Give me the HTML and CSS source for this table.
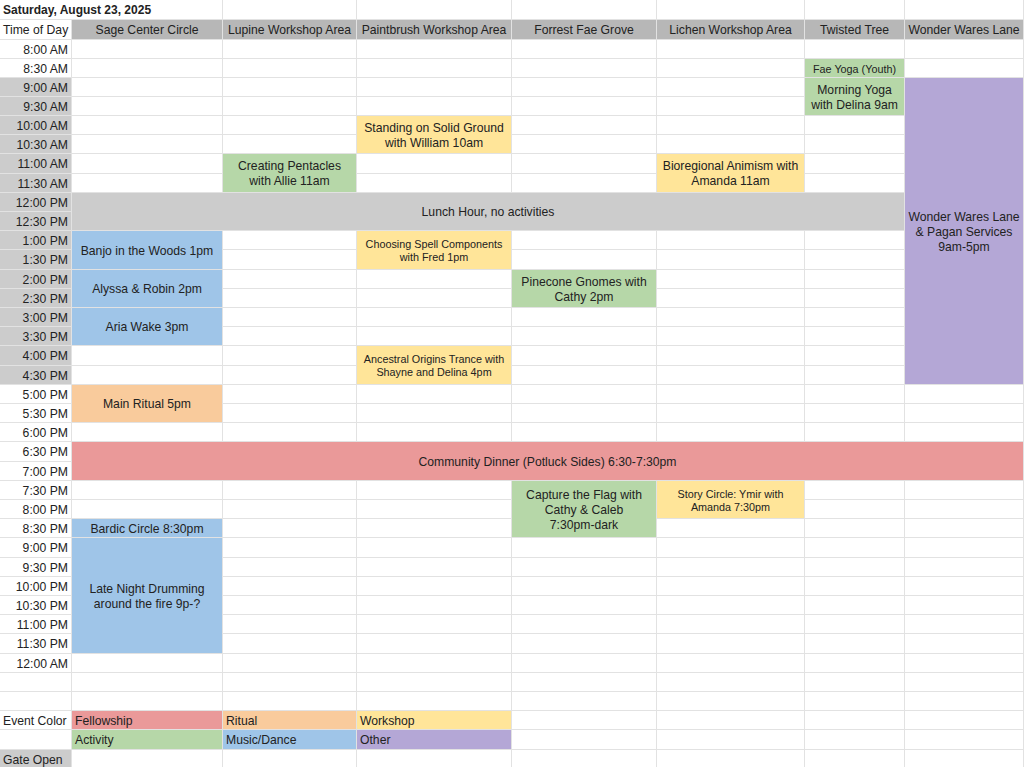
FILE: index.html
```html
<!DOCTYPE html>
<html>
<head>
<meta charset="utf-8">
<link rel="stylesheet" href="styles.css">
</head>
<body>
<table class="sheet">
<colgroup>
<col class="c-time"><col class="c-sage"><col class="c-lupine"><col class="c-paint"><col class="c-forrest"><col class="c-lichen"><col class="c-twisted"><col class="c-wonder">
</colgroup>
<tbody>
<tr class="hrow"><td class="title" colspan="2">Saturday, August 23, 2025</td><td></td><td></td><td></td><td></td><td></td><td></td></tr>
<tr class="hrow"><td class="corner">Time of Day</td><td class="head">Sage Center Circle</td><td class="head">Lupine Workshop Area</td><td class="head">Paintbrush Workshop Area</td><td class="head">Forrest Fae Grove</td><td class="head">Lichen Workshop Area</td><td class="head">Twisted Tree</td><td class="head">Wonder Wares Lane</td></tr>
<tr><td class="t">8:00 AM</td><td></td><td></td><td></td><td></td><td></td><td></td><td></td></tr>
<tr><td class="t">8:30 AM</td><td></td><td></td><td></td><td></td><td></td><td class="ev green sm">Fae Yoga (Youth)</td><td></td></tr>
<tr><td class="t open">9:00 AM</td><td></td><td></td><td></td><td></td><td></td><td class="ev green" rowspan="2">Morning Yoga<br>with Delina 9am</td><td class="ev purple" rowspan="16">Wonder Wares Lane<br>&amp; Pagan Services<br>9am-5pm</td></tr>
<tr><td class="t open">9:30 AM</td><td></td><td></td><td></td><td></td><td></td></tr>
<tr><td class="t open">10:00 AM</td><td></td><td></td><td class="ev yellow" rowspan="2">Standing on Solid Ground<br>with William 10am</td><td></td><td></td><td></td></tr>
<tr><td class="t open">10:30 AM</td><td></td><td></td><td></td><td></td><td></td></tr>
<tr><td class="t open">11:00 AM</td><td></td><td class="ev green" rowspan="2">Creating Pentacles<br>with Allie 11am</td><td></td><td></td><td class="ev yellow" rowspan="2">Bioregional Animism with<br>Amanda 11am</td><td></td></tr>
<tr><td class="t open">11:30 AM</td><td></td><td></td><td></td><td></td></tr>
<tr><td class="t open">12:00 PM</td><td class="ev lunch" colspan="6" rowspan="2">Lunch Hour, no activities</td></tr>
<tr><td class="t open">12:30 PM</td></tr>
<tr><td class="t open">1:00 PM</td><td class="ev blue" rowspan="2">Banjo in the Woods 1pm</td><td></td><td class="ev yellow sm" rowspan="2">Choosing Spell Components<br>with Fred 1pm</td><td></td><td></td><td></td></tr>
<tr><td class="t open">1:30 PM</td><td></td><td></td><td></td><td></td></tr>
<tr><td class="t open">2:00 PM</td><td class="ev blue" rowspan="2">Alyssa &amp; Robin 2pm</td><td></td><td></td><td class="ev green" rowspan="2">Pinecone Gnomes with<br>Cathy 2pm</td><td></td><td></td></tr>
<tr><td class="t open">2:30 PM</td><td></td><td></td><td></td><td></td></tr>
<tr><td class="t open">3:00 PM</td><td class="ev blue" rowspan="2">Aria Wake 3pm</td><td></td><td></td><td></td><td></td><td></td></tr>
<tr><td class="t open">3:30 PM</td><td></td><td></td><td></td><td></td><td></td></tr>
<tr><td class="t open">4:00 PM</td><td></td><td></td><td class="ev yellow sm" rowspan="2">Ancestral Origins Trance with<br>Shayne and Delina 4pm</td><td></td><td></td><td></td></tr>
<tr><td class="t open">4:30 PM</td><td></td><td></td><td></td><td></td><td></td></tr>
<tr><td class="t">5:00 PM</td><td class="ev orange" rowspan="2">Main Ritual 5pm</td><td></td><td></td><td></td><td></td><td></td><td></td></tr>
<tr><td class="t">5:30 PM</td><td></td><td></td><td></td><td></td><td></td><td></td></tr>
<tr><td class="t">6:00 PM</td><td></td><td></td><td></td><td></td><td></td><td></td><td></td></tr>
<tr><td class="t">6:30 PM</td><td class="ev red" colspan="7" rowspan="2">Community Dinner (Potluck Sides) 6:30-7:30pm</td></tr>
<tr><td class="t">7:00 PM</td></tr>
<tr><td class="t">7:30 PM</td><td></td><td></td><td></td><td class="ev green" rowspan="3">Capture the Flag with<br>Cathy &amp; Caleb<br>7:30pm-dark</td><td class="ev yellow sm" rowspan="2">Story Circle: Ymir with<br>Amanda 7:30pm</td><td></td><td></td></tr>
<tr><td class="t">8:00 PM</td><td></td><td></td><td></td><td></td><td></td></tr>
<tr><td class="t">8:30 PM</td><td class="ev blue">Bardic Circle 8:30pm</td><td></td><td></td><td></td><td></td><td></td></tr>
<tr><td class="t">9:00 PM</td><td class="ev blue" rowspan="6">Late Night Drumming<br>around the fire 9p-?</td><td></td><td></td><td></td><td></td><td></td><td></td></tr>
<tr><td class="t">9:30 PM</td><td></td><td></td><td></td><td></td><td></td><td></td></tr>
<tr><td class="t">10:00 PM</td><td></td><td></td><td></td><td></td><td></td><td></td></tr>
<tr><td class="t">10:30 PM</td><td></td><td></td><td></td><td></td><td></td><td></td></tr>
<tr><td class="t">11:00 PM</td><td></td><td></td><td></td><td></td><td></td><td></td></tr>
<tr><td class="t">11:30 PM</td><td></td><td></td><td></td><td></td><td></td><td></td></tr>
<tr><td class="t">12:00 AM</td><td></td><td></td><td></td><td></td><td></td><td></td><td></td></tr>
<tr><td></td><td></td><td></td><td></td><td></td><td></td><td></td><td></td></tr>
<tr><td></td><td></td><td></td><td></td><td></td><td></td><td></td><td></td></tr>
<tr><td class="label">Event Color</td><td class="key red">Fellowship</td><td class="key orange">Ritual</td><td class="key yellow indent">Workshop</td><td></td><td></td><td></td><td></td></tr>
<tr><td></td><td class="key green">Activity</td><td class="key blue">Music/Dance</td><td class="key purple">Other</td><td></td><td></td><td></td><td></td></tr>
<tr><td class="label open">Gate Open</td><td></td><td></td><td></td><td></td><td></td><td></td><td></td></tr>
</tbody>
</table>
</body>
</html>
```

FILE: styles.css
```css
html, body {
  margin: 0;
  padding: 0;
  background: #ffffff;
}

body {
  width: 1024px;
  height: 767px;
  overflow: hidden;
}

.sheet {
  border-collapse: separate;
  border-spacing: 0;
  table-layout: fixed;
  width: 1024px;
  font-family: "Liberation Sans", Arial, sans-serif;
  font-size: 12.2px;
  line-height: 15px;
  color: #222222;
}

.c-time { width: 72px; }
.c-sage { width: 151px; }
.c-lupine { width: 134px; }
.c-paint { width: 155px; }
.c-forrest { width: 145px; }
.c-lichen { width: 148px; }
.c-twisted { width: 100px; }
.c-wonder { width: 119px; }

.sheet tr {
  height: 19px;
}

.sheet tr:nth-child(5n+9),
.sheet tr.hrow {
  height: 20px;
}

.sheet td {
  border-right: 1px solid #e2e2e2;
  border-bottom: 1px solid #e2e2e2;
  padding: 2px 3px 0;
  white-space: nowrap;
  vertical-align: middle;
  overflow: visible;
}

.title {
  font-weight: bold;
  font-size: 12px;
  padding-left: 6px;
  padding-top: 4px;
}

.corner {
  text-align: center;
  padding-left: 0;
  padding-right: 0;
}

.head {
  background: #b7b7b7;
  border-color: #b7b7b7;
  text-align: center;
}

.t {
  text-align: right;
}

.open {
  background: #cccccc;
  border-color: rgba(255, 255, 255, 0.45);
}

.label {
  text-align: left;
  padding-left: 4px;
}

.ev {
  text-align: center;
  border-color: rgba(255, 255, 255, 0.35);
}

.sm {
  font-size: 10.8px;
  line-height: 13px;
}

.key {
  text-align: left;
  padding-left: 4px;
  border-color: rgba(255, 255, 255, 0.35);
}

.indent {
  padding-left: 6px;
}

.green { background: #b6d7a8; }
.yellow { background: #ffe599; }
.blue { background: #9fc5e8; }
.orange { background: #f9cb9c; }
.red { background: #ea9999; }
.purple { background: #b4a7d6; }
.lunch { background: #cccccc; }
```
